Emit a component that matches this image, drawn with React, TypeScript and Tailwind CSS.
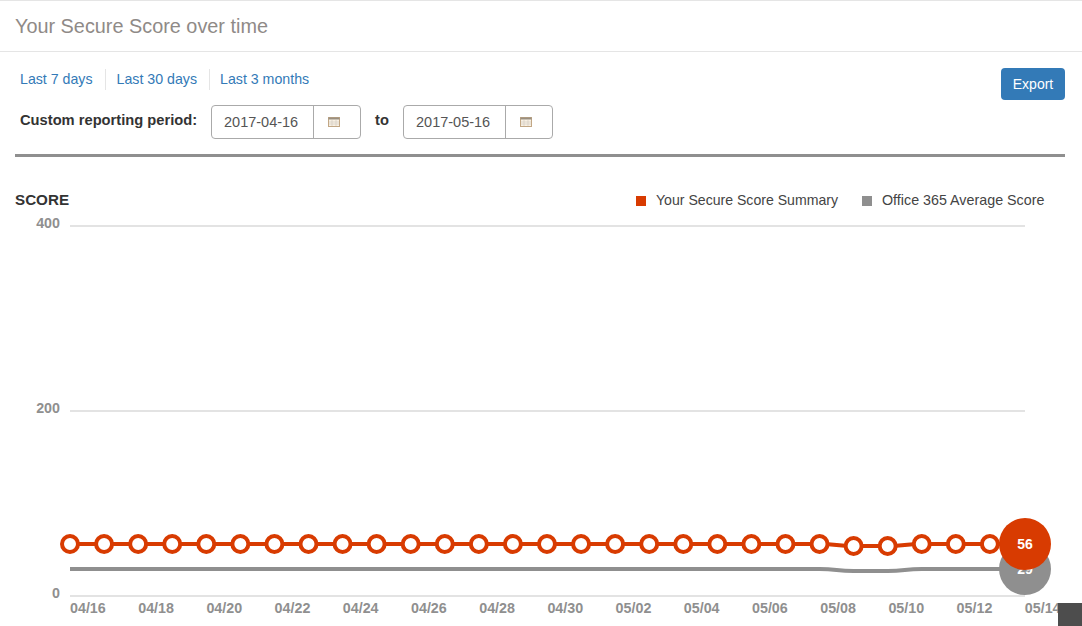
import React from 'react';

const DAY_STEP = 34.07;
const xAt = (i: number) => 70 + i * DAY_STEP;
const scoreY = (i: number) => (i === 23 || i === 24 ? 546 : 544);
const avgY = (i: number) => (i === 23 || i === 24 ? 571 : 569);
const days = Array.from({ length: 28 }, (_, i) => i);
const tickLabels = ['04/16', '04/18', '04/20', '04/22', '04/24', '04/26', '04/28', '04/30', '05/02', '05/04', '05/06', '05/08', '05/10', '05/12', '05/14'];

function CalendarIcon() {
  return (
    <svg width="12" height="10" viewBox="0 0 12 10">
      <rect x="0.5" y="0.5" width="11" height="9" fill="#f9f1e4" stroke="#c2a785" />
      <rect x="0.5" y="0.5" width="11" height="2" fill="#9a8f80" />
      <path d="M1 5h10M1 7h10M4 3v6M8 3v6" stroke="#d2ccc3" strokeWidth="0.7" />
    </svg>
  );
}

function DateInput({ value }: { value: string }) {
  return (
    <div className="flex h-[34px] w-[150px] items-stretch rounded-[4px] border border-[#aaaaaa] text-[14.5px] text-[#555555]">
      <div className="flex w-[102px] items-center border-r border-[#aaaaaa] pl-3 pt-px">{value}</div>
      <div className="flex flex-1 items-center justify-center pr-[6px]">
        <CalendarIcon />
      </div>
    </div>
  );
}

function ScoreChart() {
  const smooth = (fn: (i: number) => number) => {
    let d = `M${xAt(0)} ${fn(0)}`;
    for (let i = 1; i <= 28; i++) {
      const mid = (xAt(i - 1) + xAt(i)) / 2;
      d += ` C${mid} ${fn(i - 1)} ${mid} ${fn(i)} ${xAt(i)} ${fn(i)}`;
    }
    return d;
  };

  return (
    <svg width="1082" height="469" viewBox="0 157 1082 469" className="block">
      {[226, 411, 596].map((y) => (
        <line key={y} x1="70" x2="1025" y1={y} y2={y} stroke="#e3e3e3" strokeWidth="2" />
      ))}
      <g fontFamily="'Liberation Sans', Arial, sans-serif" fontSize="14.3" fontWeight="700" fill="#8f8f8f">
        <text x="60" y="228" textAnchor="end">400</text>
        <text x="60" y="413" textAnchor="end">200</text>
        <text x="60" y="598" textAnchor="end">0</text>
        {tickLabels.map((t, i) => (
          <text key={t} x={70 + i * 68.2} y="613">{t}</text>
        ))}
      </g>
      <path d={smooth(avgY)} fill="none" stroke="#8f8f8f" strokeWidth="4" />
      <path d={smooth(scoreY)} fill="none" stroke="#d83b01" strokeWidth="4" />
      {days.map((i) => (
        <circle key={i} cx={xAt(i)} cy={scoreY(i)} r="8" fill="#ffffff" stroke="#d83b01" strokeWidth="4" />
      ))}
      <circle cx="1025" cy="569" r="26" fill="#8f8f8f" />
      <text x="1025" y="574" textAnchor="middle" fontFamily="'Liberation Sans', Arial, sans-serif" fontSize="14" fontWeight="700" fill="#ffffff">29</text>
      <circle cx="1025" cy="544" r="26" fill="#d83b01" />
      <text x="1025" y="549" textAnchor="middle" fontFamily="'Liberation Sans', Arial, sans-serif" fontSize="14" fontWeight="700" fill="#ffffff">56</text>
    </svg>
  );
}

export default function App() {
  return (
    <div className="relative h-[626px] w-[1082px] overflow-hidden bg-white font-['Liberation_Sans',Arial,sans-serif]">
      <div className="flex h-[52px] items-center border-y border-[#e5e5e5] px-[15px] pt-px text-[19.85px] text-[#8f8a87]">
        Your Secure Score over time
      </div>

      <div className="ml-[15px] mr-[17px] h-[105px] border-b-[3px] border-[#8f8f8f]">
        <div className="flex items-start justify-between">
          <div>
            <div className="mt-[17px] flex h-[21px] items-center pl-[5px] text-[14.2px] text-[#337ab7]">
              <span className="pr-3">Last 7 days</span>
              <span className="border-l border-[#e5e5e5] pl-[11px] pr-3">Last 30 days</span>
              <span className="border-l border-[#e5e5e5] pl-[10px]">Last 3 months</span>
            </div>
            <div className="mt-[15px] flex items-center pl-[5px]">
              <span className="w-[191px] pb-[3px] text-[14.7px] font-bold text-[#333333]">Custom reporting period:</span>
              <DateInput value="2017-04-16" />
              <span className="w-[42px] pb-[3px] text-center text-[14.7px] font-bold text-[#333333]">to</span>
              <DateInput value="2017-05-16" />
            </div>
          </div>
          <button className="mt-4 h-8 w-16 rounded-[4px] bg-[#337ab7] text-[14px] text-white">Export</button>
        </div>
      </div>

      <div className="relative">
        <div className="absolute left-[15px] top-[32px] text-[15.2px] font-bold text-[#333333]">SCORE</div>
        <div className="absolute left-[636px] top-[33px] flex items-center text-[14.1px] text-[#444444]">
          <span className="mr-[10px] h-[10px] w-[10px] bg-[#d83b01]" />
          <span className="mr-6">Your Secure Score Summary</span>
          <span className="mr-[10px] h-[10px] w-[10px] bg-[#8f8f8f]" />
          <span className="text-[14.3px]">Office 365 Average Score</span>
        </div>
        <ScoreChart />
      </div>

      <div className="absolute bottom-0 right-0 h-[23px] w-6 bg-[#4d4d4d]" />
    </div>
  );
}
